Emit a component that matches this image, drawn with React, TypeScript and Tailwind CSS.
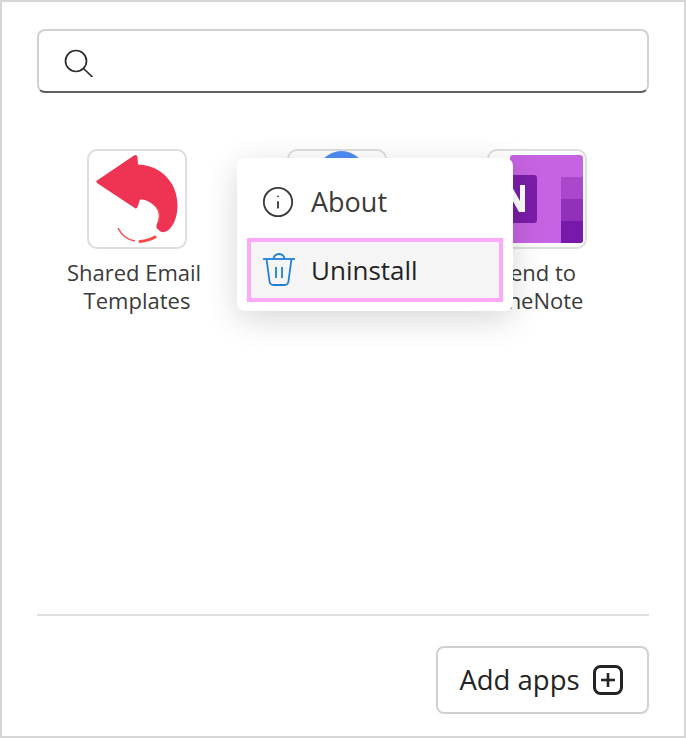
import { Info } from "lucide-react";
import type { ReactElement, ReactNode } from "react";

function ReplyIcon(): ReactElement {
  return (
    <svg viewBox="89 151 96 96" className="h-24 w-24">
      <path
        d="M97 180.5 L134 155.5 Q137 154 137.5 157 L138 164.5 C160 165 177.5 182 177.5 205 C177.5 215 175 223 169.5 229 Q165 234 160.5 231.5 L157.5 229 Q155.5 227 157 223.5 C160 217 159.5 212 155.5 207 C151 202 146 199.5 140 199.5 L137.5 207 Q136.5 209.5 134 207.5 L97 183 Q95.5 181.5 97 180.5 Z"
        fill="#ee3353"
      />
      <path d="M158.5 222 C160.5 216 160 211 156 206" fill="none" stroke="#fb5050" strokeWidth="1.5" />
      <path d="M118 228 C122 236 128 240 135 241" fill="none" stroke="#fb5050" strokeWidth="1.6" />
      <path d="M140 241.5 C145 241 150 240 155 237" fill="none" stroke="#fb4a4a" strokeWidth="3" strokeLinecap="round" />
    </svg>
  );
}

function GoogleDotIcon(): ReactElement {
  return (
    <svg viewBox="289 151 96 96" className="h-24 w-24">
      <circle cx="341.5" cy="176" r="25" fill="#4f8df5" />
    </svg>
  );
}

function OneNoteIcon(): ReactElement {
  return (
    <svg viewBox="489 151 96 96" className="h-24 w-24">
      <rect x="510" y="155" width="73" height="88" rx="3" fill="#c663e2" />
      <rect x="561" y="177" width="22" height="22" fill="#ab47cb" />
      <rect x="561" y="199" width="22" height="22" fill="#9130b8" />
      <path d="M561 221 H583 V240 Q583 243 580 243 H561 Z" fill="#7719aa" />
      <rect x="491" y="175" width="46" height="48" rx="3" fill="#7a1da8" />
      <path d="M505 185 H511 L520 201 V185 H525 V212 H519 L510 196 V212 H505 Z" fill="#ffffff" />
    </svg>
  );
}

function AppTile({ icon, label }: { icon: ReactNode; label?: ReactNode }): ReactElement {
  return (
    <div className="flex w-[200px] flex-col items-center">
      <div className="flex h-[100px] w-[100px] items-center justify-center overflow-hidden rounded-[10px] border-2 border-[#dedede] bg-white">
        {icon}
      </div>
      <div className="mt-[9px] text-center text-[22px] leading-[28px] text-[#3b3b3b]">{label}</div>
    </div>
  );
}

export default function App(): ReactElement {
  return (
    <div
      className="relative flex h-[738px] w-[686px] flex-col border-2 border-[#d6d6d6] bg-white px-[35px] pt-[27px]"
      style={{ fontFamily: '"Open Sans", "Noto Sans", sans-serif' }}
    >
      <div className="flex h-[64px] items-center rounded-[8px] border-2 border-x-[#d1d1d1] border-t-[#d1d1d1] border-b-[#5f5f5f] pl-[23px]">
        <svg viewBox="0 0 32 32" className="h-8 w-8" fill="none" stroke="#2b2b2b" strokeWidth="1.7">
          <circle cx="14" cy="16" r="10.5" />
          <path d="M21.5 23.5 L30.5 32" />
        </svg>
      </div>

      <div className="mt-[56px] flex flex-1">
        <AppTile
          icon={<ReplyIcon />}
          label={
            <>
              <span className="-ml-[6px] block">Shared Email</span>
              Templates
            </>
          }
        />
        <AppTile icon={<GoogleDotIcon />} />
        <AppTile
          icon={<OneNoteIcon />}
          label={
            <>
              Send to
              <br />
              OneNote
            </>
          }
        />
      </div>

      <div className="mb-[30px] border-t-2 border-[#e0e0e0]" />
      <div className="mb-[22px] flex justify-end">
        <button className="flex h-[68px] w-[213px] items-center justify-center gap-[13px] rounded-[8px] border-2 border-[#d1d1d1] bg-white pr-[3px] text-[27.5px] text-[#242424]">
          Add apps
          <svg viewBox="0 0 30 30" className="h-[30px] w-[30px]" fill="none" stroke="#242424" strokeWidth="3">
            <rect x="1.5" y="1.5" width="27" height="27" rx="6" />
            <path d="M15 8 V22 M8 15 H22" strokeWidth="2.6" />
          </svg>
        </button>
      </div>

      <div className="absolute left-[235px] top-[156px] flex h-[153px] w-[276px] flex-col rounded-[8px] bg-white px-[10px] pt-[13px] text-[26px] shadow-[0_8px_32px_rgba(0,0,0,0.16)]">
        <div className="flex h-[62px] items-center pl-[15px] text-[#3b3b3b]">
          <Info size={34} strokeWidth={1.3} className="-ml-[1px]" />
          <span className="ml-[16px] text-[27px]">About</span>
        </div>
        <div className="mt-[5px] flex h-[64px] items-center border-[4px] border-[#fda9f9] bg-[#f5f5f5] pl-[11px] text-[#242424]">
          <svg viewBox="0 0 34 34" className="h-[34px] w-[34px]" fill="none" stroke="#1f7fd6" strokeWidth="1.8">
            <path d="M1 6 H33" />
            <path d="M11.5 6 A5.5 5 0 0 1 22.5 6" />
            <path d="M4.5 6 L7.5 28 A4 4 0 0 0 11.5 32 H22.5 A4 4 0 0 0 26.5 28 L29.5 6" />
            <path d="M14 14 V25 M20 14 V25" />
          </svg>
          <span className="ml-[15px]">Uninstall</span>
        </div>
      </div>
    </div>
  );
}
